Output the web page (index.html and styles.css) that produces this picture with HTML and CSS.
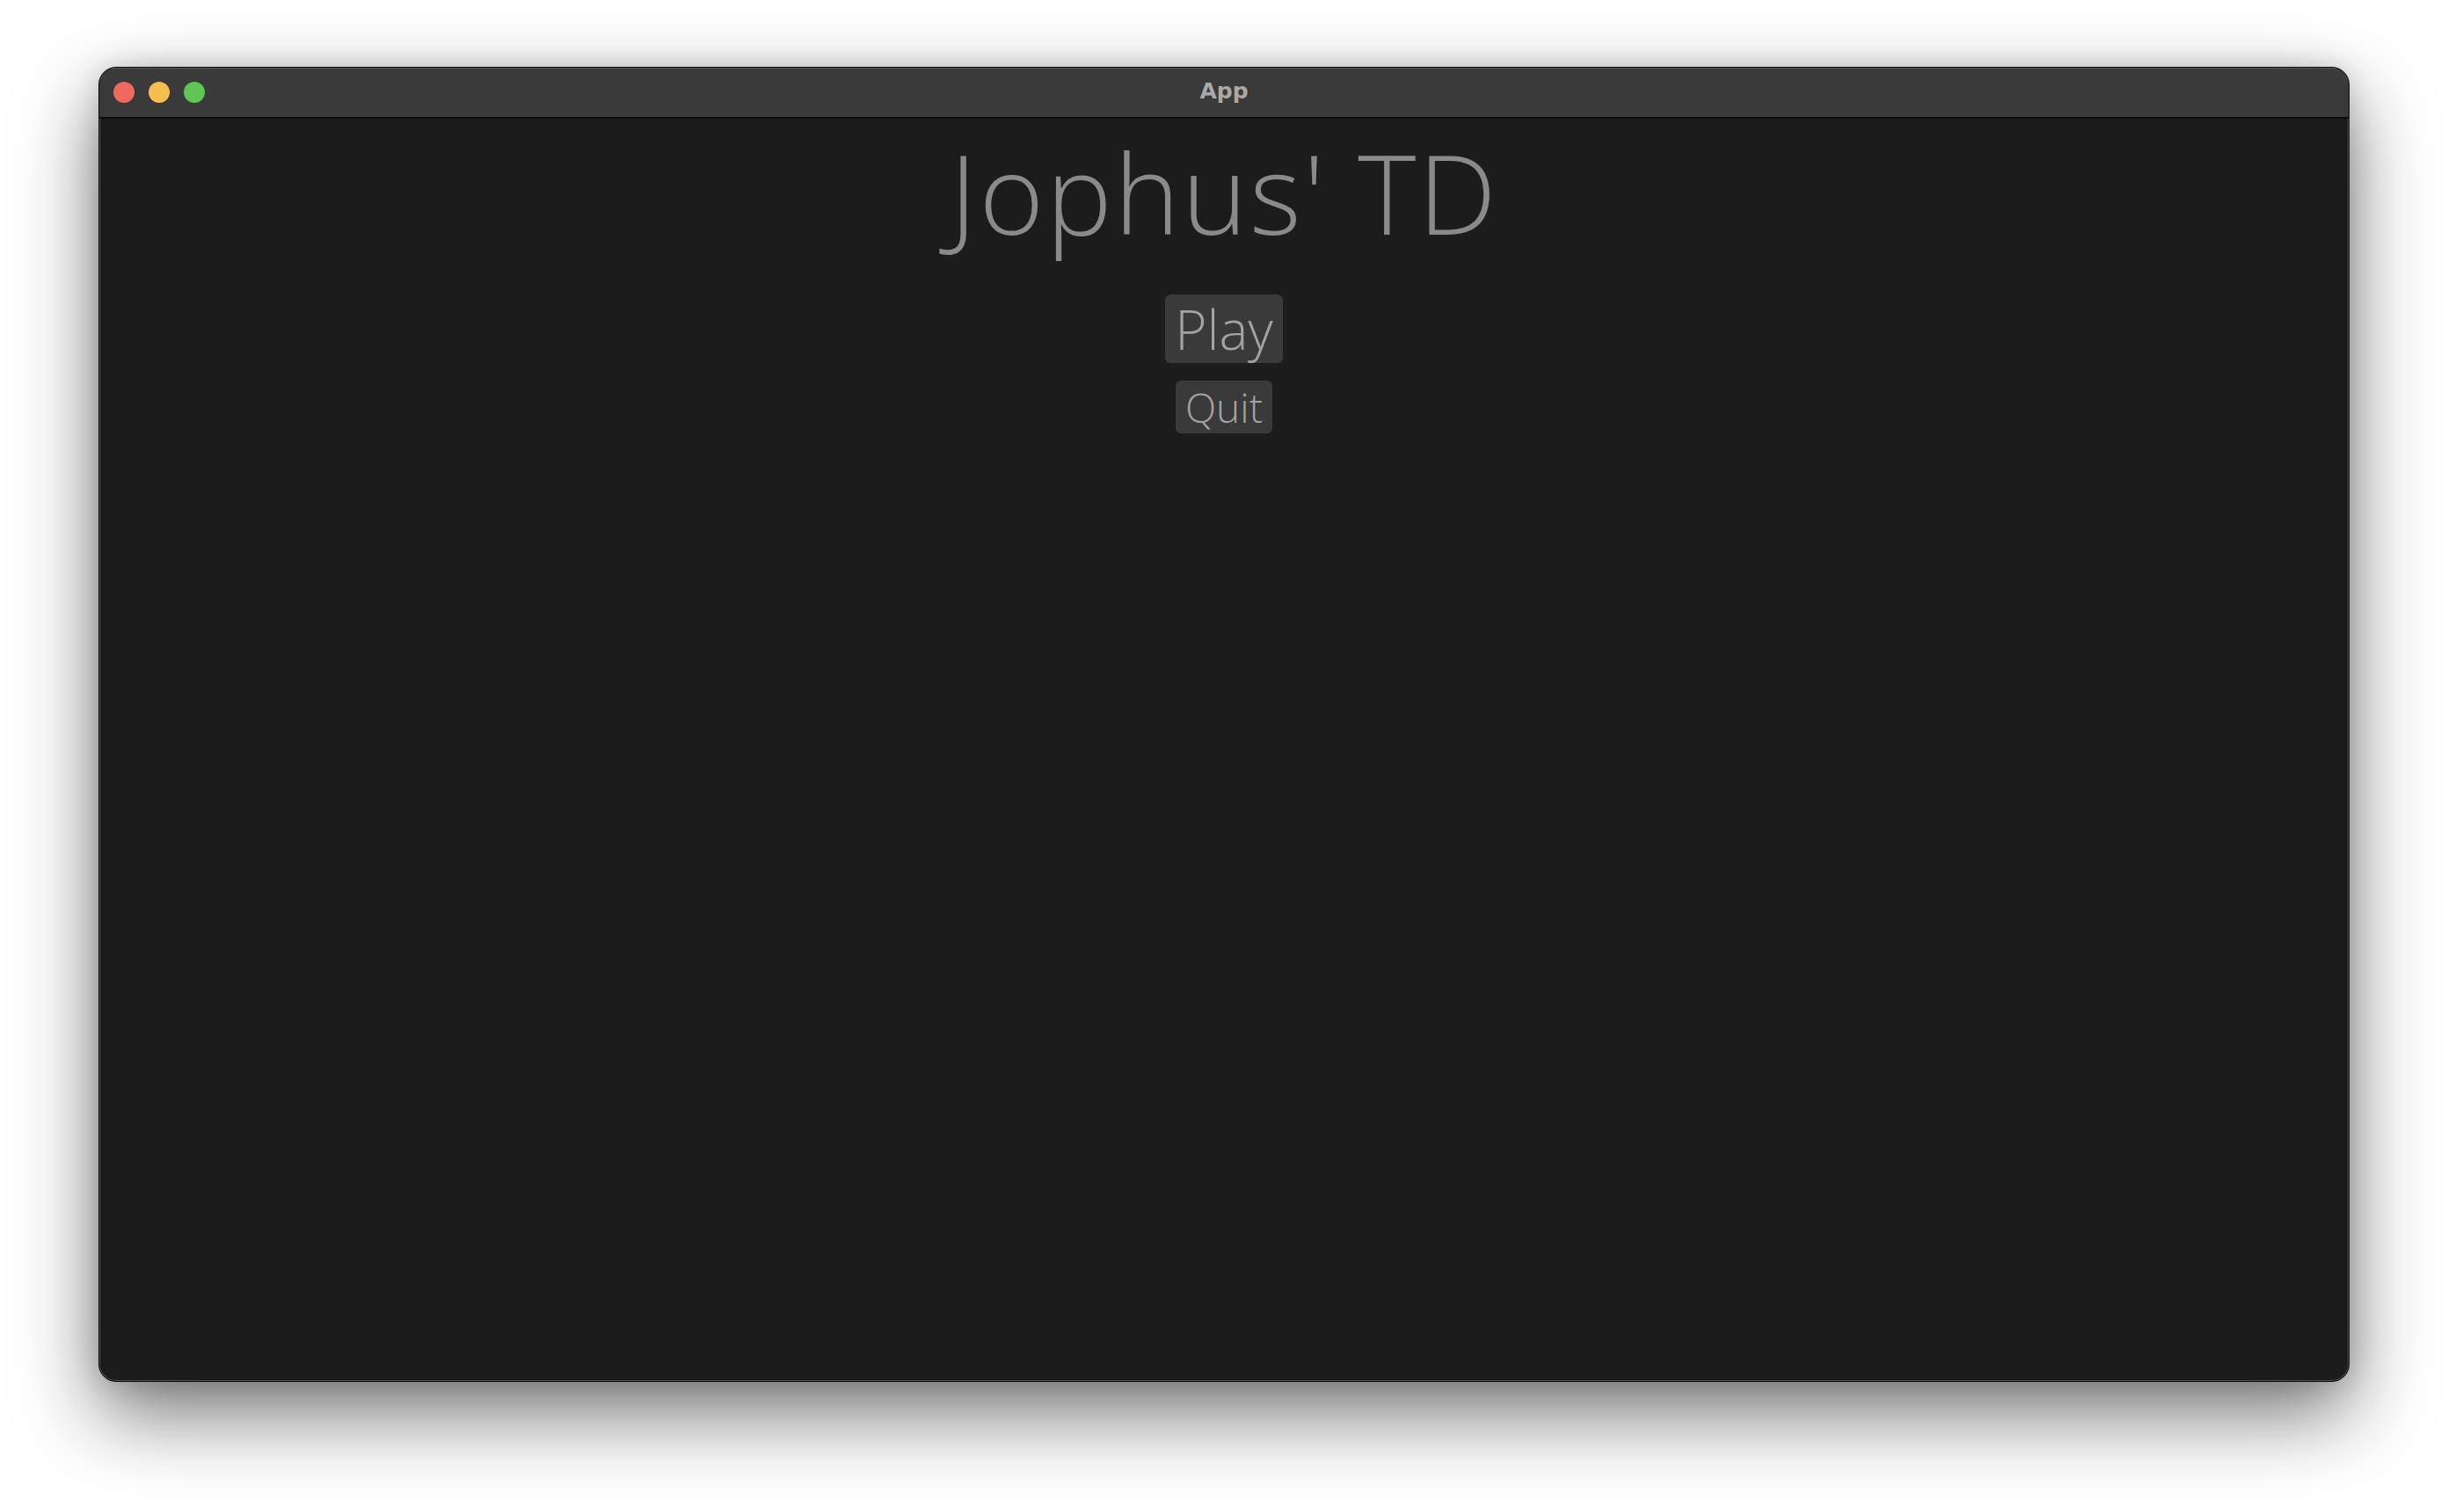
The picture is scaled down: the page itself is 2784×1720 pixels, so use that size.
FILE: index.html
```html
<!DOCTYPE html>
<html>
<head>
<meta charset="utf-8">
<link rel="stylesheet" href="styles.css">
</head>
<body>
<div class="window">
  <div class="titlebar">
    <div class="lights">
      <span class="light red"></span>
      <span class="light yellow"></span>
      <span class="light green"></span>
    </div>
    <div class="title">App</div>
  </div>
  <div class="content">
    <h1 class="heading">Jophus' TD</h1>
    <button class="btn btn-play">Play</button>
    <button class="btn btn-quit">Quit</button>
  </div>
</div>
</body>
</html>
```
FILE: styles.css
```css
html, body {
  margin: 0;
  padding: 0;
  background: #ffffff;
  width: 2784px;
  height: 1720px;
  overflow: hidden;
}
body {
  display: flex;
  justify-content: center;
  align-items: flex-start;
  padding-top: 76px;
  box-sizing: border-box;
}
.window {
  width: 2560px;
  height: 1496px;
  box-sizing: border-box;
  border-radius: 20px;
  background: #1c1c1c;
  border: 1px solid #0a0a0a;
  box-shadow: inset 0 0 0 1px #505050, 0 36px 90px rgba(0,0,0,0.55), 0 0 30px rgba(0,0,0,0.15);
  overflow: hidden;
  display: flex;
  flex-direction: column;
}
.titlebar {
  height: 56px;
  flex: 0 0 56px;
  background: #3a3a3a;
  border-bottom: 2px solid #0e0e0e;
  box-shadow: inset 0 1px 0 #5a5a5a;
  position: relative;
  display: flex;
  align-items: center;
  justify-content: center;
}
.lights {
  position: absolute;
  left: 16px;
  top: 16px;
  display: flex;
  gap: 16px;
}
.light {
  width: 24px;
  height: 24px;
  border-radius: 50%;
  display: block;
}
.red { background: #ee6a5f; }
.yellow { background: #f5be4f; }
.green { background: #61c554; }
.title {
  font-family: "DejaVu Sans", "Liberation Sans", sans-serif;
  font-weight: bold;
  font-size: 25px;
  color: #a9a9a9;
  line-height: 1;
  margin-top: -3px;
}
.content {
  flex: 1;
  display: flex;
  flex-direction: column;
  align-items: center;
}
.heading {
  margin: 0;
  margin-top: 8px;
  font-family: "Open Sans", sans-serif;
  font-weight: 300;
  font-size: 126px;
  line-height: 150px;
  color: #8a8a8a;
  letter-spacing: 2.5px;
}
.btn {
  border: none;
  background: #3a3a3a;
  border-radius: 6px;
  font-family: "Open Sans", sans-serif;
  font-weight: 300;
  color: #a3a3a3;
  padding: 0;
  cursor: pointer;
}
.btn-play {
  margin-top: 42px;
  width: 134px;
  height: 78px;
  font-size: 62px;
  line-height: 78px;
}
.btn-quit {
  margin-top: 20px;
  width: 110px;
  height: 60px;
  font-size: 46px;
  line-height: 60px;
}
```
